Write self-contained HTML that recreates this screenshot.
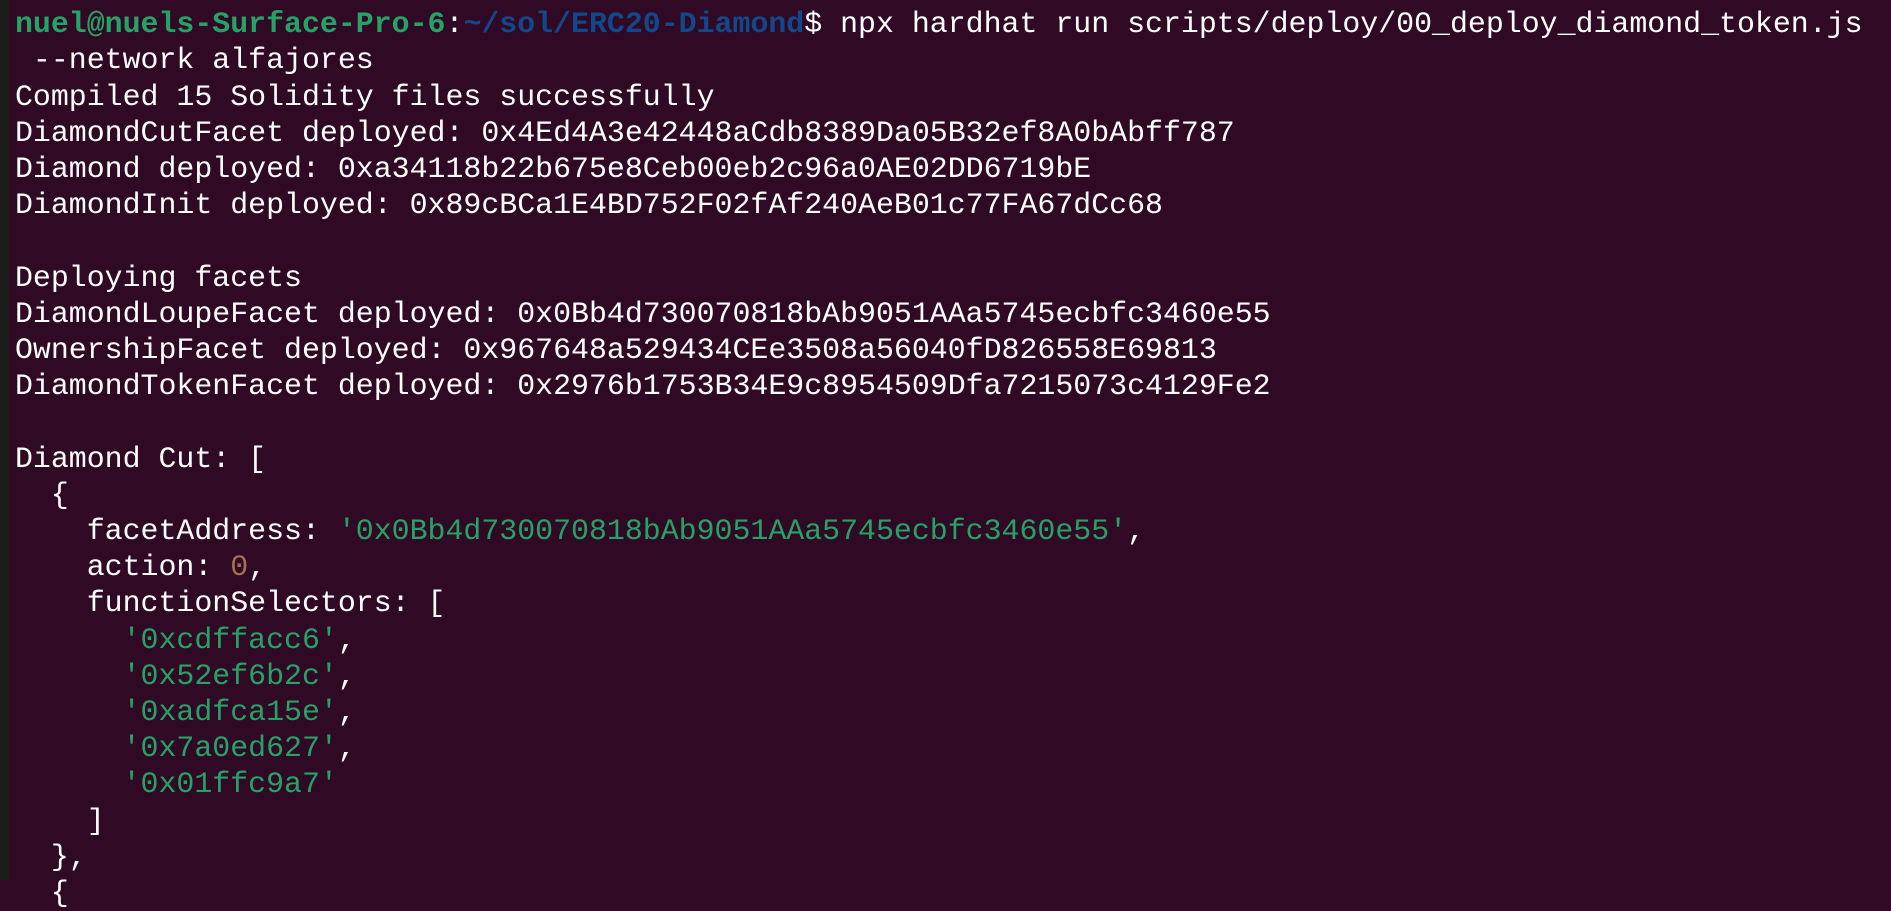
<!DOCTYPE html>
<html><head><meta charset="utf-8"><style>
html,body{margin:0;padding:0;width:1891px;height:880px;overflow:hidden;background:#300a24;}
.strip{position:absolute;left:0;top:0;width:9px;height:880px;background:#1c1c1c;}
pre{position:absolute;left:15px;top:-30px;margin:0;font-family:"Liberation Mono","DejaVu Sans Mono",monospace;font-size:29.9px;line-height:36.2px;color:#ffffff;white-space:pre;}
.g{color:#26a269;font-weight:bold}.b{color:#12488b;font-weight:bold}.s{color:#26a269}.n{color:#a2734c}
</style></head><body><div class="strip"></div>
<pre>

<span class="g">nuel@nuels-Surface-Pro-6</span>:<span class="b">~/sol/ERC20-Diamond</span>$ npx hardhat run scripts/deploy/00_deploy_diamond_token.js
 --network alfajores
Compiled 15 Solidity files successfully
DiamondCutFacet deployed: 0x4Ed4A3e42448aCdb8389Da05B32ef8A0bAbff787
Diamond deployed: 0xa34118b22b675e8Ceb00eb2c96a0AE02DD6719bE
DiamondInit deployed: 0x89cBCa1E4BD752F02fAf240AeB01c77FA67dCc68

Deploying facets
DiamondLoupeFacet deployed: 0x0Bb4d730070818bAb9051AAa5745ecbfc3460e55
OwnershipFacet deployed: 0x967648a529434CEe3508a56040fD826558E69813
DiamondTokenFacet deployed: 0x2976b1753B34E9c8954509Dfa7215073c4129Fe2

Diamond Cut: [
  {
    facetAddress: <span class="s">'0x0Bb4d730070818bAb9051AAa5745ecbfc3460e55'</span>,
    action: <span class="n">0</span>,
    functionSelectors: [
      <span class="s">'0xcdffacc6'</span>,
      <span class="s">'0x52ef6b2c'</span>,
      <span class="s">'0xadfca15e'</span>,
      <span class="s">'0x7a0ed627'</span>,
      <span class="s">'0x01ffc9a7'</span>
    ]
  },
  {
</pre></body></html>
